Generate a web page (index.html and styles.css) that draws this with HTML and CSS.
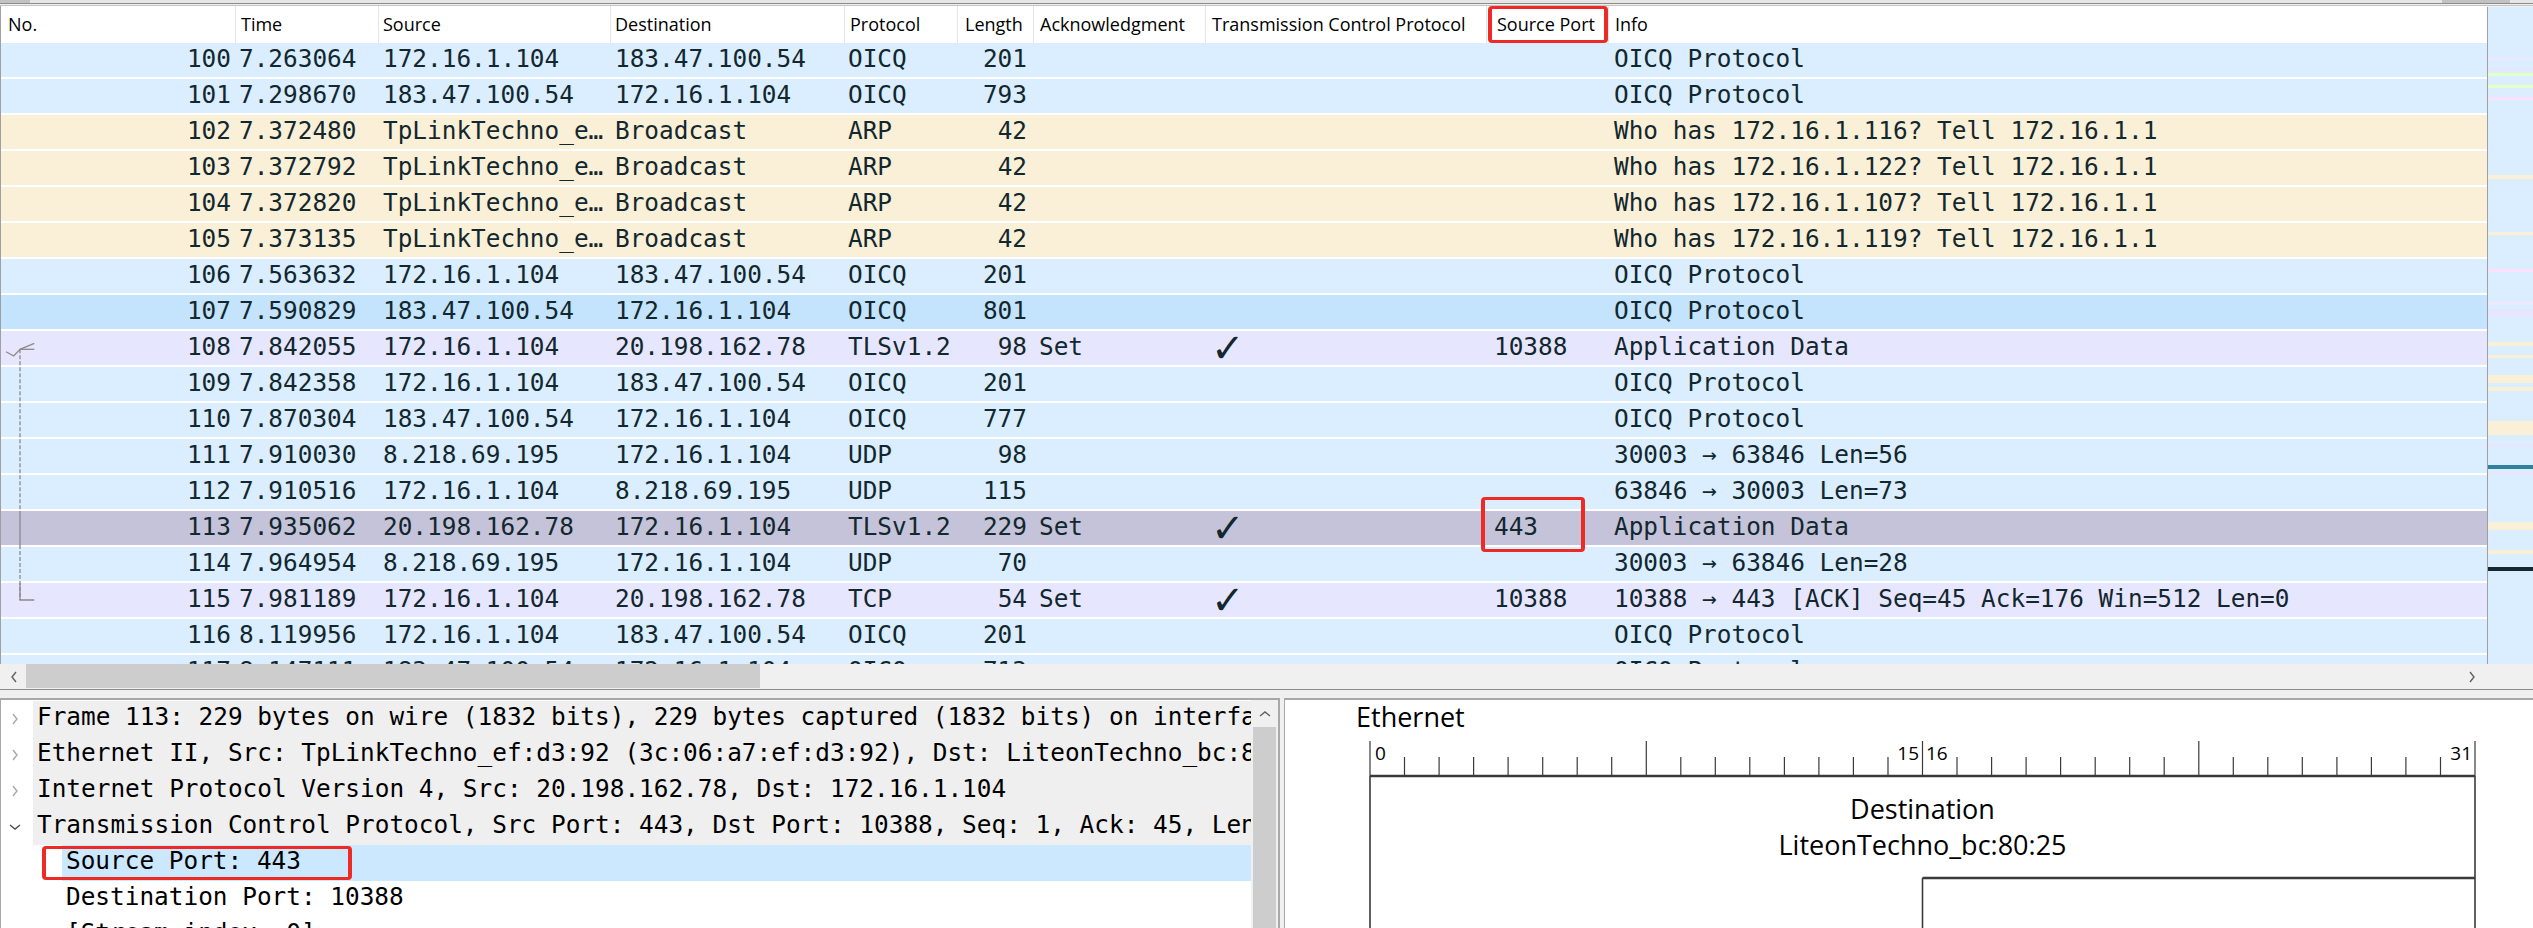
FILE: index.html
```html
<!DOCTYPE html>
<html>
<head>
<meta charset="utf-8">
<link rel="stylesheet" href="styles.css">
</head>
<body>
<div class="topstrip"><div class="tthumb tt1"></div><div class="tthumb tt2"></div></div>
<div class="topline"></div>
<div class="main">
  <div class="list">
    <div class="hdr">
      <div class="cell c-no">No.</div>
      <div class="cell c-time">Time</div>
      <div class="cell c-src">Source</div>
      <div class="cell c-dst">Destination</div>
      <div class="cell c-proto">Protocol</div>
      <div class="cell c-len">Length</div>
      <div class="cell c-ack">Acknowledgment</div>
      <div class="cell c-tcp">Transmission Control Protocol</div>
      <div class="cell c-sport">Source Port</div>
      <div class="cell c-info">Info</div>
    </div>
    <div class="redbox rb-hdr"></div>
    <div class="body">
      <div class="row udp"><span class="c-no">100</span><span class="c-time">7.263064</span><span class="c-src">172.16.1.104</span><span class="c-dst">183.47.100.54</span><span class="c-proto">OICQ</span><span class="c-len">201</span><span class="c-ack"></span><span class="c-tcp"></span><span class="c-sport"></span><span class="c-info">OICQ Protocol</span></div>
      <div class="row udp"><span class="c-no">101</span><span class="c-time">7.298670</span><span class="c-src">183.47.100.54</span><span class="c-dst">172.16.1.104</span><span class="c-proto">OICQ</span><span class="c-len">793</span><span class="c-ack"></span><span class="c-tcp"></span><span class="c-sport"></span><span class="c-info">OICQ Protocol</span></div>
      <div class="row arp"><span class="c-no">102</span><span class="c-time">7.372480</span><span class="c-src">TpLinkTechno_e…</span><span class="c-dst">Broadcast</span><span class="c-proto">ARP</span><span class="c-len">42</span><span class="c-ack"></span><span class="c-tcp"></span><span class="c-sport"></span><span class="c-info">Who has 172.16.1.116? Tell 172.16.1.1</span></div>
      <div class="row arp"><span class="c-no">103</span><span class="c-time">7.372792</span><span class="c-src">TpLinkTechno_e…</span><span class="c-dst">Broadcast</span><span class="c-proto">ARP</span><span class="c-len">42</span><span class="c-ack"></span><span class="c-tcp"></span><span class="c-sport"></span><span class="c-info">Who has 172.16.1.122? Tell 172.16.1.1</span></div>
      <div class="row arp"><span class="c-no">104</span><span class="c-time">7.372820</span><span class="c-src">TpLinkTechno_e…</span><span class="c-dst">Broadcast</span><span class="c-proto">ARP</span><span class="c-len">42</span><span class="c-ack"></span><span class="c-tcp"></span><span class="c-sport"></span><span class="c-info">Who has 172.16.1.107? Tell 172.16.1.1</span></div>
      <div class="row arp"><span class="c-no">105</span><span class="c-time">7.373135</span><span class="c-src">TpLinkTechno_e…</span><span class="c-dst">Broadcast</span><span class="c-proto">ARP</span><span class="c-len">42</span><span class="c-ack"></span><span class="c-tcp"></span><span class="c-sport"></span><span class="c-info">Who has 172.16.1.119? Tell 172.16.1.1</span></div>
      <div class="row udp"><span class="c-no">106</span><span class="c-time">7.563632</span><span class="c-src">172.16.1.104</span><span class="c-dst">183.47.100.54</span><span class="c-proto">OICQ</span><span class="c-len">201</span><span class="c-ack"></span><span class="c-tcp"></span><span class="c-sport"></span><span class="c-info">OICQ Protocol</span></div>
      <div class="row hover"><span class="c-no">107</span><span class="c-time">7.590829</span><span class="c-src">183.47.100.54</span><span class="c-dst">172.16.1.104</span><span class="c-proto">OICQ</span><span class="c-len">801</span><span class="c-ack"></span><span class="c-tcp"></span><span class="c-sport"></span><span class="c-info">OICQ Protocol</span></div>
      <div class="row tcp"><span class="c-no">108</span><span class="c-time">7.842055</span><span class="c-src">172.16.1.104</span><span class="c-dst">20.198.162.78</span><span class="c-proto">TLSv1.2</span><span class="c-len">98</span><span class="c-ack">Set</span><span class="c-tcp chk">✓</span><span class="c-sport">10388</span><span class="c-info">Application Data</span></div>
      <div class="row udp"><span class="c-no">109</span><span class="c-time">7.842358</span><span class="c-src">172.16.1.104</span><span class="c-dst">183.47.100.54</span><span class="c-proto">OICQ</span><span class="c-len">201</span><span class="c-ack"></span><span class="c-tcp"></span><span class="c-sport"></span><span class="c-info">OICQ Protocol</span></div>
      <div class="row udp"><span class="c-no">110</span><span class="c-time">7.870304</span><span class="c-src">183.47.100.54</span><span class="c-dst">172.16.1.104</span><span class="c-proto">OICQ</span><span class="c-len">777</span><span class="c-ack"></span><span class="c-tcp"></span><span class="c-sport"></span><span class="c-info">OICQ Protocol</span></div>
      <div class="row udp"><span class="c-no">111</span><span class="c-time">7.910030</span><span class="c-src">8.218.69.195</span><span class="c-dst">172.16.1.104</span><span class="c-proto">UDP</span><span class="c-len">98</span><span class="c-ack"></span><span class="c-tcp"></span><span class="c-sport"></span><span class="c-info">30003 → 63846 Len=56</span></div>
      <div class="row udp"><span class="c-no">112</span><span class="c-time">7.910516</span><span class="c-src">172.16.1.104</span><span class="c-dst">8.218.69.195</span><span class="c-proto">UDP</span><span class="c-len">115</span><span class="c-ack"></span><span class="c-tcp"></span><span class="c-sport"></span><span class="c-info">63846 → 30003 Len=73</span></div>
      <div class="row sel"><span class="c-no">113</span><span class="c-time">7.935062</span><span class="c-src">20.198.162.78</span><span class="c-dst">172.16.1.104</span><span class="c-proto">TLSv1.2</span><span class="c-len">229</span><span class="c-ack">Set</span><span class="c-tcp chk">✓</span><span class="c-sport">443</span><span class="c-info">Application Data</span></div>
      <div class="row udp"><span class="c-no">114</span><span class="c-time">7.964954</span><span class="c-src">8.218.69.195</span><span class="c-dst">172.16.1.104</span><span class="c-proto">UDP</span><span class="c-len">70</span><span class="c-ack"></span><span class="c-tcp"></span><span class="c-sport"></span><span class="c-info">30003 → 63846 Len=28</span></div>
      <div class="row tcp"><span class="c-no">115</span><span class="c-time">7.981189</span><span class="c-src">172.16.1.104</span><span class="c-dst">20.198.162.78</span><span class="c-proto">TCP</span><span class="c-len">54</span><span class="c-ack">Set</span><span class="c-tcp chk">✓</span><span class="c-sport">10388</span><span class="c-info">10388 → 443 [ACK] Seq=45 Ack=176 Win=512 Len=0</span></div>
      <div class="row udp"><span class="c-no">116</span><span class="c-time">8.119956</span><span class="c-src">172.16.1.104</span><span class="c-dst">183.47.100.54</span><span class="c-proto">OICQ</span><span class="c-len">201</span><span class="c-ack"></span><span class="c-tcp"></span><span class="c-sport"></span><span class="c-info">OICQ Protocol</span></div>
      <div class="row udp"><span class="c-no">117</span><span class="c-time">8.147111</span><span class="c-src">183.47.100.54</span><span class="c-dst">172.16.1.104</span><span class="c-proto">OICQ</span><span class="c-len">713</span><span class="c-ack"></span><span class="c-tcp"></span><span class="c-sport"></span><span class="c-info">OICQ Protocol</span></div>
      <svg class="treelines" width="40" height="621" viewBox="0 0 40 621">
        <polyline points="5,308.7 12.7,313 19,306.3 33.3,300.3" fill="none" stroke="#8a8a8a" stroke-width="1.3"/>
        <line x1="19" y1="306.3" x2="33.3" y2="306.3" stroke="#8a8a8a" stroke-width="1.3"/>
        <line x1="19" y1="306.3" x2="19" y2="468" stroke="#8a8a8a" stroke-width="1.3" stroke-dasharray="4 2"/>
        <line x1="19" y1="468" x2="19" y2="502" stroke="#8a8a8a" stroke-width="1.3"/>
        <line x1="19" y1="502" x2="19" y2="557" stroke="#8a8a8a" stroke-width="1.3" stroke-dasharray="4 2"/>
        <polyline points="19,540 19,557 33.3,557" fill="none" stroke="#8a8a8a" stroke-width="1.3"/>
      </svg>
      <div class="redbox rb-row"></div>
    </div>
  </div>
  <div class="minimap">
    <i class="stripe" style="top:50px;height:3px;background:#ebe9ff"></i>
    <i class="stripe" style="top:61px;height:3px;background:#e7e6ff"></i>
    <i class="stripe" style="top:66px;height:3px;background:#e4ffc7"></i>
    <i class="stripe" style="top:78px;height:3px;background:#e4ffc7"></i>
    <i class="stripe" style="top:90px;height:3px;background:#fde0fb"></i>
    <i class="stripe" style="top:168px;height:4px;background:#faf0d7"></i>
    <i class="stripe" style="top:225px;height:3px;background:#faf0d7"></i>
    <i class="stripe" style="top:262px;height:3px;background:#fde0fb"></i>
    <i class="stripe" style="top:294px;height:4px;background:#ebe9ff"></i>
    <i class="stripe" style="top:302px;height:8px;background:#e7e6ff"></i>
    <i class="stripe" style="top:335px;height:4px;background:#faf0d7"></i>
    <i class="stripe" style="top:348px;height:3px;background:#faf0d7"></i>
    <i class="stripe" style="top:368px;height:8px;background:#faf0d7"></i>
    <i class="stripe" style="top:380px;height:4px;background:#faf0d7"></i>
    <i class="stripe" style="top:414px;height:14px;background:#faf0d7"></i>
    <i class="stripe" style="top:437px;height:3px;background:#e7e6ff"></i>
    <i class="stripe" style="top:458px;height:4px;background:#2f7f9e"></i>
    <i class="stripe" style="top:465px;height:3px;background:#e7e6ff"></i>
    <i class="stripe" style="top:515px;height:8px;background:#faf0d7"></i>
    <i class="stripe" style="top:543px;height:4px;background:#faf0d7"></i>
    <i class="stripe" style="top:560px;height:4px;background:#12272e"></i>
  </div>
</div>
<div class="hscroll">
  <svg class="arrow-l" width="8" height="12" viewBox="0 0 8 12"><polyline points="6,1 2,6 6,11" fill="none" stroke="#606060" stroke-width="1.4"/></svg>
  <div class="hthumb"></div>
  <div class="hspacer"></div>
  <svg class="arrow-r" width="8" height="12" viewBox="0 0 8 12"><polyline points="2,1 6,6 2,11" fill="none" stroke="#606060" stroke-width="1.4"/></svg>
</div>
<div class="bottom">
  <div class="detail">
    <div class="tree">
      <div class="trow"><span class="exp"><svg width="8" height="12" viewBox="0 0 8 12"><polyline points="2,1 6,6 2,11" fill="none" stroke="#a8a8a8" stroke-width="1.4"/></svg></span><span class="item parent">Frame 113: 229 bytes on wire (1832 bits), 229 bytes captured (1832 bits) on interface \Device\NPF_{3F1}, id 0</span></div>
      <div class="trow"><span class="exp"><svg width="8" height="12" viewBox="0 0 8 12"><polyline points="2,1 6,6 2,11" fill="none" stroke="#a8a8a8" stroke-width="1.4"/></svg></span><span class="item parent">Ethernet II, Src: TpLinkTechno_ef:d3:92 (3c:06:a7:ef:d3:92), Dst: LiteonTechno_bc:80:25 (f8:a2:d6:bc:80:25)</span></div>
      <div class="trow"><span class="exp"><svg width="8" height="12" viewBox="0 0 8 12"><polyline points="2,1 6,6 2,11" fill="none" stroke="#a8a8a8" stroke-width="1.4"/></svg></span><span class="item parent">Internet Protocol Version 4, Src: 20.198.162.78, Dst: 172.16.1.104</span></div>
      <div class="trow"><span class="exp"><svg width="12" height="8" viewBox="0 0 12 8"><polyline points="1,2 6,6 11,2" fill="none" stroke="#505050" stroke-width="1.4"/></svg></span><span class="item parent">Transmission Control Protocol, Src Port: 443, Dst Port: 10388, Seq: 1, Ack: 45, Len: 175</span></div>
      <div class="trow child"><span class="item selitem">Source Port: 443</span></div>
      <div class="trow child"><span class="item">Destination Port: 10388</span></div>
      <div class="trow child"><span class="item">[Stream index: 0]</span></div>
      <div class="redbox rb-det"></div>
    </div>
    <div class="vscroll">
      <div class="varrow"><svg width="12" height="8" viewBox="0 0 12 8"><polyline points="1,6 6,2 11,6" fill="none" stroke="#606060" stroke-width="1.4"/></svg></div>
      <div class="vthumb"></div>
    </div>
  </div>
  <div class="diagram">
    <svg class="diag" width="1249" height="230" viewBox="0 0 1249 230">
      <text x="72" y="29" class="dtitle">Ethernet</text>
      <g stroke="#3a3a3a" stroke-width="1.2">
        <line x1="86" y1="43" x2="86" y2="78"/>
        <line x1="120.5" y1="59" x2="120.5" y2="78"/>
        <line x1="155.1" y1="59" x2="155.1" y2="78"/>
        <line x1="189.6" y1="59" x2="189.6" y2="78"/>
        <line x1="224.1" y1="59" x2="224.1" y2="78"/>
        <line x1="258.7" y1="59" x2="258.7" y2="78"/>
        <line x1="293.2" y1="59" x2="293.2" y2="78"/>
        <line x1="327.7" y1="59" x2="327.7" y2="78"/>
        <line x1="362.3" y1="43" x2="362.3" y2="78"/>
        <line x1="396.8" y1="59" x2="396.8" y2="78"/>
        <line x1="431.3" y1="59" x2="431.3" y2="78"/>
        <line x1="465.8" y1="59" x2="465.8" y2="78"/>
        <line x1="500.4" y1="59" x2="500.4" y2="78"/>
        <line x1="534.9" y1="59" x2="534.9" y2="78"/>
        <line x1="569.4" y1="59" x2="569.4" y2="78"/>
        <line x1="604" y1="59" x2="604" y2="78"/>
        <line x1="638.5" y1="43" x2="638.5" y2="78"/>
        <line x1="673" y1="59" x2="673" y2="78"/>
        <line x1="707.6" y1="59" x2="707.6" y2="78"/>
        <line x1="742.1" y1="59" x2="742.1" y2="78"/>
        <line x1="776.6" y1="59" x2="776.6" y2="78"/>
        <line x1="811.2" y1="59" x2="811.2" y2="78"/>
        <line x1="845.7" y1="59" x2="845.7" y2="78"/>
        <line x1="880.2" y1="59" x2="880.2" y2="78"/>
        <line x1="914.8" y1="43" x2="914.8" y2="78"/>
        <line x1="949.3" y1="59" x2="949.3" y2="78"/>
        <line x1="983.8" y1="59" x2="983.8" y2="78"/>
        <line x1="1018.3" y1="59" x2="1018.3" y2="78"/>
        <line x1="1052.9" y1="59" x2="1052.9" y2="78"/>
        <line x1="1087.4" y1="59" x2="1087.4" y2="78"/>
        <line x1="1121.9" y1="59" x2="1121.9" y2="78"/>
        <line x1="1156.5" y1="59" x2="1156.5" y2="78"/>
        <line x1="1191" y1="43" x2="1191" y2="78"/>
      </g>
      <text x="91" y="62" class="dnum">0</text>
      <text x="635" y="62" class="dnum" text-anchor="end">15</text>
      <text x="642" y="62" class="dnum">16</text>
      <text x="1188" y="62" class="dnum" text-anchor="end">31</text>
      <g stroke="#3a3a3a" fill="none">
        <line x1="86" y1="78" x2="1191" y2="78" stroke-width="2.6"/>
        <line x1="86" y1="78" x2="86" y2="230" stroke-width="1.6"/>
        <line x1="1191" y1="78" x2="1191" y2="230" stroke-width="1.6"/>
        <line x1="638.5" y1="180" x2="1191" y2="180" stroke-width="2.4"/>
        <line x1="638.5" y1="180" x2="638.5" y2="230" stroke-width="1.6"/>
      </g>
      <text x="638.5" y="121" class="dfield" text-anchor="middle">Destination</text>
      <text x="638.5" y="157" class="dfield" text-anchor="middle">LiteonTechno_bc:80:25</text>
    </svg>
  </div>
</div>
</body>
</html>
```
FILE: styles.css
```css
* { box-sizing: border-box; }
body {
  margin: 0;
  width: 2533px;
  height: 928px;
  overflow: hidden;
  background: #f0f0f0;
  font-family: "Open Sans", "Noto Sans", sans-serif;
}
.topstrip {
  height: 3px;
  background: #e6e6e6;
  display: flex;
  justify-content: space-between;
}
.tthumb { height: 3px; background: #c2c2c2; }
.tt1 { width: 30px; }
.tt2 { width: 68px; margin-right: 23px; }
.topline {
  height: 3px;
  border-top: 1px solid #8c8c8c;
  border-bottom: 1px solid #c4c4c4;
  background: #f0f0f0;
}
.main {
  display: flex;
  height: 658px;
}
.list {
  flex: 1;
  min-width: 0;
  display: flex;
  flex-direction: column;
  border-left: 1px solid #a0a0a0;
  background: #fff;
  position: relative;
}
.hdr {
  height: 37px;
  display: flex;
  background: #fff;
  font-size: 18px;
  color: #000;
  flex: none;
}
.hdr .cell {
  border-right: 1px solid #e5e5e5;
  line-height: 37px;
  white-space: nowrap;
  overflow: hidden;
}
.hdr .c-no { padding-left: 7px; text-align: left; padding-right: 0; }
.hdr .c-time { padding-left: 5px; }
.hdr .c-src { padding-left: 4px; }
.hdr .c-dst { padding-left: 4px; }
.hdr .c-proto { padding-left: 5px; }
.hdr .c-len { padding-left: 7px; text-align: left; padding-right: 0; }
.hdr .c-ack { padding-left: 6px; }
.hdr .c-tcp { padding-left: 6px; }
.hdr .c-sport { padding-left: 10px; }
.hdr .c-info { padding-left: 6px; border-right: none; }

.c-no { width: 235px; flex: none; text-align: right; padding-right: 5px; }
.c-time { width: 143px; flex: none; padding-left: 3px; }
.c-src { width: 232px; flex: none; padding-left: 4px; }
.c-dst { width: 234px; flex: none; padding-left: 4px; }
.c-proto { width: 113px; flex: none; padding-left: 3px; }
.c-len { width: 76px; flex: none; text-align: right; padding-right: 7px; }
.c-ack { width: 172px; flex: none; padding-left: 5px; }
.c-tcp { width: 281px; flex: none; padding-left: 7px; }
.c-sport { width: 122px; flex: none; padding-left: 7px; }
.c-info { flex: 1; min-width: 0; padding-left: 5px; }

.body {
  flex: 1;
  overflow: hidden;
  position: relative;
}
.row {
  display: flex;
  height: 36px;
  border-bottom: 2px solid #fff;
  font-family: "DejaVu Sans Mono", "Liberation Mono", monospace;
  font-size: 24.4px;
  line-height: 32px;
  color: #12272e;
  white-space: pre;
}
.row span { overflow: hidden; display: block; }
.row .chk {
  font-family: "DejaVu Sans", sans-serif;
  font-size: 40px;
  line-height: 34px;
  padding-left: 5px;
  overflow: visible;
}
.udp { background: #daeeff; }
.arp { background: #faf0d7; }
.tcp { background: #e7e6ff; }
.hover { background: #c4e3fd; }
.sel { background: #c5c3d9; }

.treelines {
  position: absolute;
  left: 0;
  top: 0;
}
.redbox {
  position: absolute;
  border-style: solid;
  border-color: #ee2a24;
  border-width: 3px 4px;
  border-radius: 4px;
  pointer-events: none;
}
.rb-hdr { left: 1487px; top: 0; width: 120px; height: 37px; }
.rb-row { left: 1480px; top: 454px; width: 104px; height: 55px; }

.minimap {
  width: 46px;
  flex: none;
  border-left: 1px solid #a0a0a0;
  background: #daeeff;
  position: relative;
  margin-top: 1px;
  height: 657px;
}
.stripe {
  position: absolute;
  left: 0;
  right: 0;
  display: block;
}

.hscroll {
  height: 26px;
  display: flex;
  align-items: stretch;
  border-bottom: 1px solid #8c8c8c;
  background: #f0f0f0;
  padding-right: 57px;
}
.arrow-l { margin: 7px 8px 0 10px; flex: none; }
.arrow-r { margin: 7px 0 0 0; flex: none; }
.hthumb { width: 734px; background: #cdcdcd; height: 24px; flex: none; }
.hspacer { flex: 1; }

.bottom {
  margin-top: 8px;
  height: 230px;
  display: flex;
  gap: 4px;
}
.detail {
  width: 1280px;
  flex: none;
  background: #fff;
  border-top: 2px solid #a8a8a8;
  border-left: 1px solid #a8a8a8;
  border-right: 2px solid #a8a8a8;
  display: flex;
  overflow: hidden;
}
.tree {
  flex: 1;
  min-width: 0;
  position: relative;
  padding-top: 1px;
  overflow: hidden;
}
.trow {
  height: 36px;
  display: flex;
  align-items: stretch;
  font-family: "DejaVu Sans Mono", "Liberation Mono", monospace;
  font-size: 24.4px;
  line-height: 31px;
  color: #000;
  white-space: pre;
}
.exp {
  width: 32px;
  flex: none;
  display: flex;
  align-items: center;
  justify-content: center;
  padding-right: 4px;
}
.item {
  flex: 1;
  min-width: 0;
  overflow: hidden;
  padding-left: 4px;
}
.parent { background: #efefef; }
.child { padding-left: 61px; }
.selitem { background: #cce8ff; }
.rb-det { left: 41px; top: 146px; width: 310px; height: 34px; }

.vscroll {
  width: 27px;
  flex: none;
  background: #f0f0f0;
  display: flex;
  flex-direction: column;
  align-items: center;
}
.varrow { height: 27px; display: flex; align-items: center; justify-content: center; }
.vthumb { width: 23px; flex: 1; background: #cdcdcd; }

.diagram {
  flex: 1;
  min-width: 0;
  background: #fff;
  border-top: 2px solid #a8a8a8;
  border-left: 1px solid #a8a8a8;
  overflow: hidden;
}
.diag { display: block; margin-top: -2px; margin-left: -1px; }
.dtitle { font-family: "Open Sans", sans-serif; font-size: 27px; fill: #000; }
.dnum { font-family: "Open Sans", sans-serif; font-size: 19px; fill: #000; }
.dfield { font-family: "Open Sans", sans-serif; font-size: 27px; fill: #000; }
```
